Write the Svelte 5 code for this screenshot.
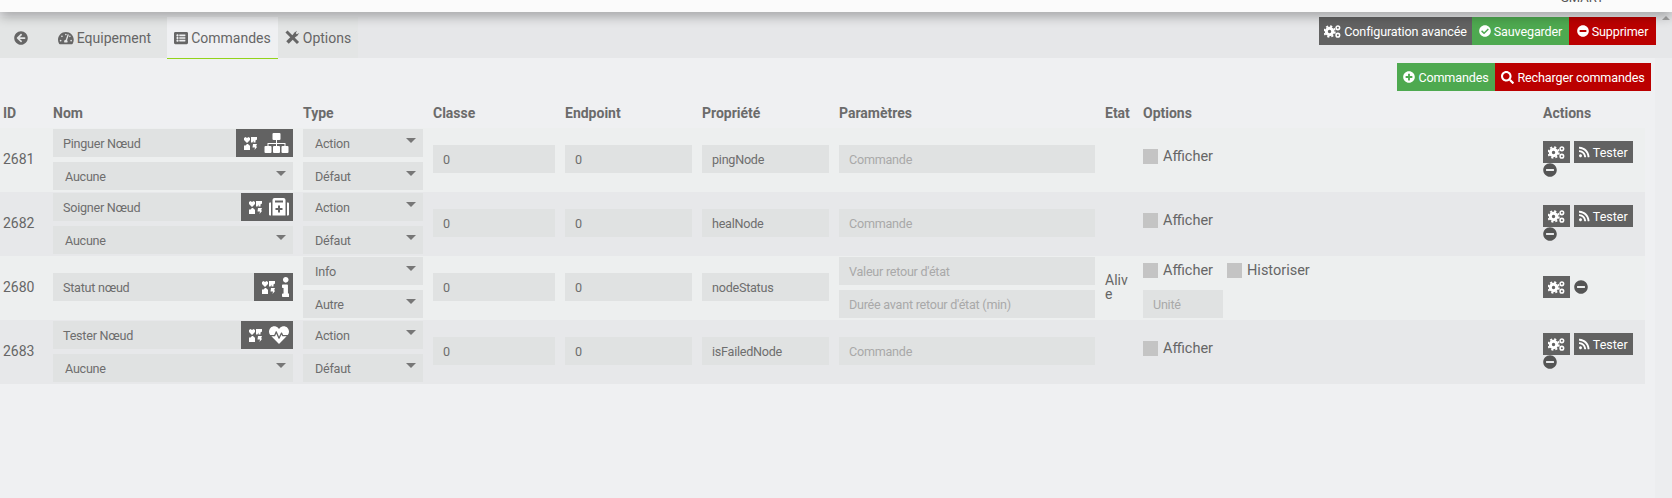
<script>
  const rows = [
    { id: 2681, name: 'Pinguer Nœud', icon: 'sitemap', sub: 'Aucune', type: 'Action', subtype: 'Défaut', prop: 'pingNode', params: ['Commande'], test: true },
    { id: 2682, name: 'Soigner Nœud', icon: 'medkit', sub: 'Aucune', type: 'Action', subtype: 'Défaut', prop: 'healNode', params: ['Commande'], test: true },
    { id: 2680, name: 'Statut nœud', icon: 'info', type: 'Info', subtype: 'Autre', prop: 'nodeStatus', params: ["Valeur retour d'état", "Durée avant retour d'état (min)"], etat: 'Alive', info: true },
    { id: 2683, name: 'Tester Nœud', icon: 'heartbeat', sub: 'Aucune', type: 'Action', subtype: 'Défaut', prop: 'isFailedNode', params: ['Commande'], test: true }
  ]

  const heads = ['ID', 'Nom', 'Type', 'Classe', 'Endpoint', 'Propriété', 'Paramètres', 'Etat', 'Options', 'Actions']

  const minus = 'M256 8C119 8 8 119 8 256s111 248 248 248 248-111 248-248S393 8 256 8zM124 296c-6.6 0-12-5.4-12-12v-56c0-6.6 5.4-12 12-12h264c6.6 0 12 5.4 12 12v56c0 6.6-5.4 12-12 12H124z'
  const plus = 'M256 8C119 8 8 119 8 256s111 248 248 248 248-111 248-248S393 8 256 8zm144 276c0 6.6-5.4 12-12 12h-92v92c0 6.6-5.4 12-12 12h-56c-6.6 0-12-5.4-12-12v-92h-92c-6.6 0-12-5.4-12-12v-56c0-6.6 5.4-12 12-12h92v-92c0-6.6 5.4-12 12-12h56c6.6 0 12 5.4 12 12v92h92c6.6 0 12 5.4 12 12v56z'
  const check = 'M504 256c0 136.967-111.033 248-248 248S8 392.967 8 256 119.033 8 256 8s248 111.033 248 248zM227.314 387.314l184-184c6.248-6.248 6.248-16.379 0-22.627l-22.627-22.627c-6.248-6.249-16.379-6.249-22.628 0L216 308.118l-70.059-70.059c-6.248-6.248-16.379-6.248-22.628 0l-22.627 22.627c-6.248 6.248-6.248 16.379 0 22.627l104 104c6.249 6.249 16.379 6.249 22.628.001z'
  const search = 'M505 442.7L405.3 343c-4.5-4.5-10.6-7-17-7H372c27.6-35.3 44-79.7 44-128C416 93.1 322.9 0 208 0S0 93.1 0 208s93.1 208 208 208c48.3 0 92.7-16.4 128-44v16.3c0 6.4 2.5 12.5 7 17l99.7 99.7c9.4 9.4 24.6 9.4 33.9 0l28.3-28.3c9.4-9.4 9.4-24.6.1-34zM208 336c-70.7 0-128-57.2-128-128 0-70.7 57.2-128 128-128 70.7 0 128 57.2 128 128 0 70.7-57.2 128-128 128z'
  const back = 'M256 504C119 504 8 393 8 256S119 8 256 8s248 111 248 248-111 248-248 248zm28.9-143.6L209.4 288H392c13.3 0 24-10.7 24-24v-16c0-13.3-10.7-24-24-24H209.4l75.5-72.4c9.7-9.3 9.9-24.8.4-34.3l-11-10.9c-9.4-9.4-24.6-9.4-33.9 0L107.7 239c-9.4 9.4-9.4 24.6 0 33.9l132.7 132.7c9.4 9.4 24.6 9.4 33.9 0l11-10.9c9.5-9.5 9.3-25-.4-34.3z'
  const gauge = 'M288 32C128.94 32 0 160.94 0 320c0 52.8 14.25 102.26 39.06 144.8 5.61 9.62 16.3 15.2 27.44 15.2h443c11.14 0 21.83-5.58 27.44-15.2C561.75 422.26 576 372.8 576 320c0-159.06-128.94-288-288-288zm0 64c14.71 0 26.58 10.13 30.32 23.65-1.11 2.26-2.64 4.23-3.45 6.67l-9.22 27.67c-5.13 3.49-10.97 6.01-17.64 6.01-17.67 0-32-14.33-32-32S270.33 96 288 96zM96 384c-17.67 0-32-14.33-32-32s14.33-32 32-32 32 14.33 32 32-14.33 32-32 32zm48-160c-17.67 0-32-14.33-32-32s14.33-32 32-32 32 14.33 32 32-14.33 32-32 32zm246.77-72.41l-61.33 184C343.13 347.33 352 364.54 352 384c0 11.72-3.38 22.55-8.88 32H232.88c-5.5-9.45-8.88-20.28-8.88-32 0-33.94 26.5-61.43 59.9-63.59l61.34-184.01c4.17-12.56 17.73-19.45 30.36-15.17 12.57 4.19 19.35 17.79 15.17 30.36zm14.66 57.2l15.52-46.55c3.47-1.29 7.13-2.23 11.05-2.23 17.67 0 32 14.33 32 32s-14.33 32-32 32c-11.38-.01-20.89-6.28-26.57-15.22zM480 384c-17.67 0-32-14.33-32-32s14.33-32 32-32 32 14.33 32 32-14.33 32-32 32z'
  const list = 'M464 480H48c-26.51 0-48-21.49-48-48V80c0-26.51 21.49-48 48-48h416c26.51 0 48 21.49 48 48v352c0 26.51-21.49 48-48 48zM128 120c-22.091 0-40 17.909-40 40s17.909 40 40 40 40-17.909 40-40-17.909-40-40-40zm0 96c-22.091 0-40 17.909-40 40s17.909 40 40 40 40-17.909 40-40-17.909-40-40-40zm0 96c-22.091 0-40 17.909-40 40s17.909 40 40 40 40-17.909 40-40-17.909-40-40-40zm288-136v-32c0-6.627-5.373-12-12-12H204c-6.627 0-12 5.373-12 12v32c0 6.627 5.373 12 12 12h200c6.627 0 12-5.373 12-12zm0 96v-32c0-6.627-5.373-12-12-12H204c-6.627 0-12 5.373-12 12v32c0 6.627 5.373 12 12 12h200c6.627 0 12-5.373 12-12zm0 96v-32c0-6.627-5.373-12-12-12H204c-6.627 0-12 5.373-12 12v32c0 6.627 5.373 12 12 12h200c6.627 0 12-5.373 12-12z'
  const rss = 'M128.081 415.959c0 35.369-28.672 64.041-64.041 64.041S0 451.328 0 415.959s28.672-64.041 64.041-64.041 64.04 28.673 64.04 64.041zm175.66 47.25c-8.354-154.6-132.185-278.587-286.95-286.95C7.656 175.765 0 183.105 0 192.253v48.069c0 8.415 6.49 15.472 14.887 16.018 111.832 7.284 201.473 96.702 208.772 208.772.547 8.397 7.604 14.887 16.018 14.887h48.069c9.149.001 16.489-7.655 15.995-16.79zm144.249.288C439.596 229.677 251.465 40.445 16.503 32.01 7.473 31.686 0 38.981 0 48.016v48.068c0 8.625 6.835 15.645 15.453 15.999 191.179 7.839 344.627 161.316 352.465 352.465.353 8.618 7.373 15.453 15.999 15.453h48.068c9.034-.001 16.329-7.474 16.005-16.504z'
  const info = 'M20 424.229h20V279.771H20c-11.046 0-20-8.954-20-20V212c0-11.046 8.954-20 20-20h112c11.046 0 20 8.954 20 20v212.229h20c11.046 0 20 8.954 20 20V492c0 11.046-8.954 20-20 20H20c-11.046 0-20-8.954-20-20v-47.771c0-11.046 8.954-20 20-20zM96 0C56.235 0 24 32.235 24 72s32.235 72 72 72 72-32.235 72-72S135.764 0 96 0z'
  const heartbeat = 'M320.2 243.8l-49.7 99.4c-6 12.1-23.4 11.7-28.9-.6l-56.9-126.3-30 71.7H60.6l182.5 186.5c7.1 7.3 18.6 7.3 25.7 0L451.4 288H342.3l-22.1-44.2zM473.7 73.9l-2.4-2.5c-51.5-52.6-135.8-52.6-187.4 0L256 100l-27.9-28.5c-51.5-52.7-135.9-52.7-187.4 0l-2.4 2.4C-10.4 123.7-12.5 203 31 256h102.4l35.9-86.2c5.4-12.9 23.6-13.2 29.4-.4l58.2 129.3 49-97.9c5.9-11.8 22.7-11.8 28.6 0l27.6 55.2H481c43.5-53 41.4-132.3-7.3-182.1z'
</script>

{#snippet glyph(d, w = 512, size = 14)}
  <svg class="glyph" viewBox="0 0 {w} 512" width={size * w / 512} height={size} fill="currentColor"><path fill-rule="evenodd" {d} /></svg>
{/snippet}

{#snippet cogs()}
  <svg class="glyph" viewBox="0 0 20 15" width="17" height="13" fill="none" stroke="currentColor">
    <circle cx="6.500" cy="7.500" r="3.800" stroke-width="3.600" />
    <circle cx="6.500" cy="7.500" r="6.200" stroke-width="2.200" stroke-dasharray="2.500 2.370" />
    <circle cx="16.300" cy="3.200" r="2.100" stroke-width="1.800" />
    <circle cx="16.300" cy="11.800" r="2.100" stroke-width="1.800" />
  </svg>
{/snippet}

{#snippet tiles()}
  <svg class="glyph" viewBox="0 0 13 13" width="13" height="13" fill="currentColor">
    <path d="M0 1 1.500 0 3 1 4.500 0 6 1V3L3 6 0 3z" />
    <path d="M7 0H13V2.500L11.500 3.500V5.500H9.500V3.500L8.500 5.500H7z" />
    <path d="M1.500 8.500 3 7H4L5.500 8.500H6V13H0V8.500z" />
    <path d="M9 7H13L12 9.500H13.500L10.500 13 11 10.500H8.500z" />
  </svg>
{/snippet}

{#snippet typeIcon(name)}
  {#if name === 'sitemap'}
    <svg class="glyph" viewBox="0 0 25 20" width="25" height="20" fill="currentColor">
      <rect x="8.500" y="0" width="8" height="7" rx="1" />
      <path d="M12 7h1v3h8.500v3h-1v-2H13v2h-1v-2H4.500v2h-1v-3H12z" />
      <rect x="0.500" y="13" width="7" height="7" rx="1" />
      <rect x="9" y="13" width="7" height="7" rx="1" />
      <rect x="17.500" y="13" width="7" height="7" rx="1" />
    </svg>
  {:else if name === 'medkit'}
    <svg class="glyph" viewBox="0 0 20 20" width="20" height="20" fill="currentColor">
      <path fill-rule="evenodd" d="M1 5.500h1v13H1a1 1 0 0 1-1-1v-11a1 1 0 0 1 1-1zM18 5.500h1a1 1 0 0 1 1 1v11a1 1 0 0 1-1 1h-1zM3.500 5.500V3a2 2 0 0 1 2-2h9a2 2 0 0 1 2 2v2.500v13h-13zM6 3.500v2h8v-2zM9 8.500v2.500H6.500v2H9v2.500h2V13h2.500v-2H11V8.500z" />
    </svg>
  {:else if name === 'info'}
    {@render glyph(info, 192, 20)}
  {:else}
    {@render glyph(heartbeat, 512, 20)}
  {/if}
{/snippet}

<div class="page">
  <header class="topbar"><span class="brand">SMART</span></header>

  <div class="tabbar">
    <nav class="tabs">
      <span class="tab back">{@render glyph(back)}</span>
      <span class="tab equip">{@render glyph(gauge, 576, 14)} Equipement</span>
      <span class="tab active">{@render glyph(list, 512, 14)} Commandes</span>
      <span class="tab opts">
        <svg class="glyph" viewBox="0 0 15 15" width="15" height="15" fill="none" stroke="currentColor">
          <path d="M1.500 1.500 13 13" stroke-width="3" />
          <path d="M2.500 12.500 10 5" stroke-width="3.600" />
          <path d="M8.500 6.500 8.800 3 12 0.800 10.800 3.200 11.800 4.200 14.200 3 12 6.200z" fill="currentColor" stroke="none" />
        </svg>
        Options
      </span>
    </nav>
    <div class="btns">
      <span class="btn grey">{@render cogs()} Configuration avancée</span>
      <span class="btn green">{@render glyph(check, 512, 12)} Sauvegarder</span>
      <span class="btn red">{@render glyph(minus, 512, 12)} Supprimer</span>
    </div>
  </div>

  <div class="panel">
    <div class="btns tools">
      <span class="btn green">{@render glyph(plus, 512, 12)} Commandes</span>
      <span class="btn red">{@render glyph(search, 512, 13)} Recharger commandes</span>
    </div>

    <div class="table">
      <div class="row head">
        {#each heads as h}<span>{h}</span>{/each}
      </div>

      {#each rows as r, i}
        <div class="row" class:alt={i % 2 === 1}>
          <span class="id">{r.id}</span>

          <div class="stack" class:double={r.sub}>
            <div class="named">
              <span class="field grow">{r.name}</span>
              <span class="addon">{@render tiles()}{@render typeIcon(r.icon)}</span>
            </div>
            {#if r.sub}<span class="field select">{r.sub}</span>{/if}
          </div>

          <div class="stack double">
            <span class="field select">{r.type}</span>
            <span class="field select">{r.subtype}</span>
          </div>

          <div class="stack"><span class="field">0</span></div>
          <div class="stack"><span class="field">0</span></div>
          <div class="stack"><span class="field">{r.prop}</span></div>

          <div class="stack" class:double={r.params.length > 1}>
            {#each r.params as p}<span class="field ph">{p}</span>{/each}
          </div>

          <span class="etat">{r.etat ?? ''}</span>

          <div class="options" class:full={r.info}>
            <div class="checks">
              <label><i></i>Afficher</label>
              {#if r.info}<label><i></i>Historiser</label>{/if}
            </div>
            {#if r.info}<span class="field ph unit">Unité</span>{/if}
          </div>

          <div class="actions" class:inline={!r.test}>
            <span class="mini">{@render cogs()}</span>
            {#if r.test}<span class="mini">{@render glyph(rss, 448, 12)} Tester</span>{/if}
            <span class="remove">{@render glyph(minus, 512, 14)}</span>
          </div>
        </div>
      {/each}
    </div>
  </div>

  <span class="scroll-up"></span>
</div>

<style>
  :global(body) {
    background: #eff0f2;
    overflow: hidden;
  }

  .page {
    position: relative;
    height: 498px;
    overflow: hidden;
    font-family: Roboto, "Liberation Sans", sans-serif;
    font-size: 13px;
    color: #666;
    background: #ecedef;
  }

  .topbar {
    position: relative;
    z-index: 2;
    height: 12px;
    background: #fbfbfb;
    box-shadow: 0 4px 12px rgba(0, 0, 0, 0.32);
    overflow: hidden;
  }

  .brand {
    position: absolute;
    left: 1561px;
    top: -10px;
    font-size: 13px;
    color: #555;
  }

  .tabbar {
    display: flex;
    justify-content: space-between;
    align-items: flex-start;
    height: 46px;
    padding: 5px 16px 0 0;
    box-sizing: border-box;
    background: #e6e7e9;
  }

  .tabs {
    display: flex;
    height: 41px;
  }

  .tab {
    display: flex;
    align-items: center;
    justify-content: center;
    gap: 3px;
    height: 41px;
    box-sizing: border-box;
    font-size: 14px;
    background: #e3e5e5;
    color: #666;
  }

  .back { width: 42px; }
  .equip { width: 125px; }
  .opts { width: 80px; }

  .active {
    width: 111px;
    height: 42px;
    background: #eff0f2;
    border-bottom: 1px solid #93d31c;
    position: relative;
  }

  .glyph {
    flex: none;
    display: block;
  }

  .btns {
    display: flex;
  }

  .btn {
    display: flex;
    align-items: center;
    justify-content: center;
    gap: 3px;
    height: 28px;
    box-sizing: border-box;
    color: #fff;
    font-size: 12.600px;
    letter-spacing: -0.15px;
  }

  .tabbar .grey { width: 153px; background: #626262; }
  .tabbar .green { width: 97px; background: #4ea950; }
  .tabbar .red { width: 87px; background: #bb0000; }

  .tools .green { width: 98px; background: #4ea950; }
  .tools .red { width: 156px; background: #bb0000; }

  .panel {
    width: 1655px;
    height: 440px;
    background: #eff0f2;
  }

  .tools {
    justify-content: flex-end;
    padding: 5px 4px 0 0;
  }

  .table {
    width: 1645px;
  }

  .row {
    display: grid;
    grid-template-columns: 53px 250px 130px 132px 137px 137px 266px 38px 400px 102px;
    grid-template-rows: 60px;
    align-items: center;
    height: 64px;
    padding: 1px 0 3px;
    box-sizing: border-box;
    background: #edefef;
  }

  .row.alt {
    background: #e7e8ea;
  }

  .row.head {
    grid-template-rows: auto;
    height: 37px;
    padding: 7px 0 0;
    background: none;
    font-size: 14px;
    font-weight: 700;
    color: #6b6b6b;
  }

  .head span:first-child {
    padding-left: 3px;
  }

  .id {
    padding-left: 3px;
    font-size: 14px;
  }

  .stack {
    display: flex;
    flex-direction: column;
    gap: 5px;
    padding-right: 10px;
  }

  .stack.double {
    align-self: start;
  }

  .field {
    position: relative;
    display: block;
    height: 28px;
    line-height: 29px;
    padding-left: 10px;
    box-sizing: border-box;
    background: #e0e2e2;
    color: #6e6e6e;
    font-size: 12.600px;
    letter-spacing: -0.25px;
    white-space: nowrap;
  }

  .select {
    padding-left: 12px;
  }

  .select::after {
    content: "";
    position: absolute;
    right: 7px;
    top: 9px;
    border: 5px solid transparent;
    border-top: 5px solid #777;
    border-bottom: 0;
  }

  .ph {
    color: #a9a9a9;
  }

  .named {
    display: flex;
  }

  .grow {
    flex: 1;
  }

  .addon {
    display: flex;
    align-items: center;
    gap: 7px;
    padding: 0 4px 0 8px;
    height: 28px;
    background: #626262;
    color: #fff;
  }

  .etat {
    font-size: 14px;
    line-height: 14px;
    padding-right: 10px;
    box-sizing: border-box;
    word-break: break-all;
  }

  .options {
    display: flex;
    flex-direction: column;
    gap: 12px;
    align-self: start;
    padding-top: 20px;
  }

  .options.full {
    padding-top: 6px;
  }

  .checks {
    display: flex;
    gap: 14px;
    height: 15px;
  }

  .checks label {
    display: flex;
    align-items: center;
    gap: 5px;
    font-size: 14.500px;
  }

  .checks i {
    display: block;
    width: 15px;
    height: 15px;
    background: #c4c4c4;
  }

  .unit {
    width: 80px;
  }

  .actions {
    display: flex;
    flex-wrap: wrap;
    gap: 0 4px;
  }

  .actions.inline {
    align-items: center;
  }

  .mini {
    display: flex;
    align-items: center;
    justify-content: center;
    gap: 3px;
    height: 22px;
    min-width: 27px;
    padding: 0 5px;
    box-sizing: border-box;
    background: #626262;
    color: #fff;
    font-size: 12.500px;
  }

  .mini + .mini {
    width: 59px;
  }

  .remove {
    color: #555;
    flex: 0 0 auto;
  }

  .scroll-up {
    position: absolute;
    right: 2px;
    top: 16px;
    border: 4px solid transparent;
    border-bottom: 4px solid #a3a3a3;
    border-top: 0;
  }
</style>
